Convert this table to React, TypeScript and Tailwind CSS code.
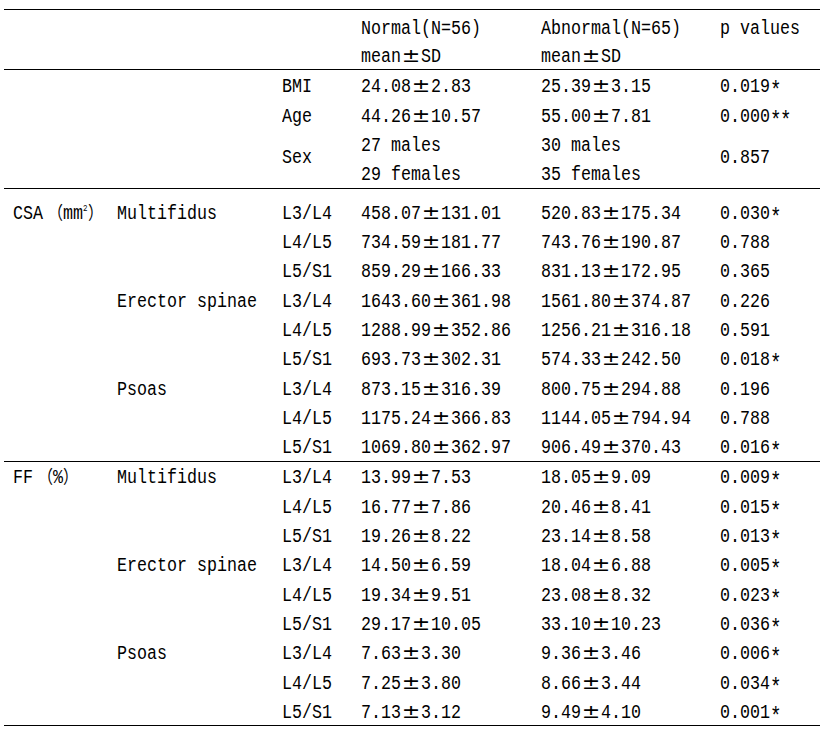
import type { ReactNode } from 'react'

type DataRow = { label?: ReactNode; muscle?: string; level: string; normal: string; abnormal: string; p: string }

const grid = 'grid grid-cols-[104px_165px_79px_180px_179px_1fr] pl-[9px]'

// SimSun-like look: 20px mono glyphs squeezed to 10px cells
function Txt({ children }: { children: ReactNode }) {
  return <span className="inline-block origin-left scale-x-[0.8333] whitespace-nowrap">{children}</span>
}

function Val({ s }: { s: string }) {
  const parts = s.split(/(±|\*)/).filter(Boolean)
  return (
    <Txt>
      {parts.map((p, i) =>
        p === '±' ? (
          <span key={i} className="inline-block w-[24px] text-center font-['DejaVu_Sans',sans-serif] text-[19px] leading-[14px]">
            <span className="inline-block scale-x-[1.4]">±</span>
          </span>
        ) : p === '*' ? (
          <span key={i} className="inline-block w-[12px] text-center text-[23px] leading-[14px] align-[-6px]">*</span>
        ) : (
          <span key={i}>{p}</span>
        ),
      )}
    </Txt>
  )
}

function Cell({ children, className = '' }: { children?: ReactNode; className?: string }) {
  return <div className={`pt-[6.7px] leading-[20px] whitespace-nowrap ${className}`}>{children}</div>
}

const cjk = "font-['Noto_Sans_CJK_SC',sans-serif] text-[18px] leading-[12px]"

const csaLabel = (
  <Txt>
    CSA<span className={`inline-block w-[24px] text-right ${cjk}`}>（</span>mm
    <span className="inline-block w-[6px] text-[9px] leading-[9px] align-[8px]">2</span>
    <span className={`inline-block w-[24px] text-left ${cjk}`}>）</span>
  </Txt>
)

const ffLabel = (
  <Txt>
    FF<span className={`inline-block w-[24px] text-right ${cjk}`}>（</span>%
    <span className={`inline-block w-[24px] text-left ${cjk}`}>）</span>
  </Txt>
)

const csa: DataRow[] = [
  { label: csaLabel, muscle: 'Multifidus', level: 'L3/L4', normal: '458.07±131.01', abnormal: '520.83±175.34', p: '0.030*' },
  { level: 'L4/L5', normal: '734.59±181.77', abnormal: '743.76±190.87', p: '0.788' },
  { level: 'L5/S1', normal: '859.29±166.33', abnormal: '831.13±172.95', p: '0.365' },
  { muscle: 'Erector spinae', level: 'L3/L4', normal: '1643.60±361.98', abnormal: '1561.80±374.87', p: '0.226' },
  { level: 'L4/L5', normal: '1288.99±352.86', abnormal: '1256.21±316.18', p: '0.591' },
  { level: 'L5/S1', normal: '693.73±302.31', abnormal: '574.33±242.50', p: '0.018*' },
  { muscle: 'Psoas', level: 'L3/L4', normal: '873.15±316.39', abnormal: '800.75±294.88', p: '0.196' },
  { level: 'L4/L5', normal: '1175.24±366.83', abnormal: '1144.05±794.94', p: '0.788' },
  { level: 'L5/S1', normal: '1069.80±362.97', abnormal: '906.49±370.43', p: '0.016*' },
]

const ff: DataRow[] = [
  { label: ffLabel, muscle: 'Multifidus', level: 'L3/L4', normal: '13.99±7.53', abnormal: '18.05±9.09', p: '0.009*' },
  { level: 'L4/L5', normal: '16.77±7.86', abnormal: '20.46±8.41', p: '0.015*' },
  { level: 'L5/S1', normal: '19.26±8.22', abnormal: '23.14±8.58', p: '0.013*' },
  { muscle: 'Erector spinae', level: 'L3/L4', normal: '14.50±6.59', abnormal: '18.04±6.88', p: '0.005*' },
  { level: 'L4/L5', normal: '19.34±9.51', abnormal: '23.08±8.32', p: '0.023*' },
  { level: 'L5/S1', normal: '29.17±10.05', abnormal: '33.10±10.23', p: '0.036*' },
  { muscle: 'Psoas', level: 'L3/L4', normal: '7.63±3.30', abnormal: '9.36±3.46', p: '0.006*' },
  { level: 'L4/L5', normal: '7.25±3.80', abnormal: '8.66±3.44', p: '0.034*' },
  { level: 'L5/S1', normal: '7.13±3.12', abnormal: '9.49±4.10', p: '0.001*' },
]

function Rows({ rows }: { rows: DataRow[] }) {
  return (
    <>
      {rows.map((r, i) => (
        <div key={i} className="contents">
          <Cell>{r.label}</Cell>
          <Cell>{r.muscle && <Val s={r.muscle} />}</Cell>
          <Cell><Val s={r.level} /></Cell>
          <Cell><Val s={r.normal} /></Cell>
          <Cell><Val s={r.abnormal} /></Cell>
          <Cell><Val s={r.p} /></Cell>
        </div>
      ))}
    </>
  )
}

export default function App() {
  return (
    <div className="min-h-screen bg-white pl-[4px] pr-[5px] pt-[9px] font-['Liberation_Mono',monospace] text-[20px] text-black">
      {/* header */}
      <div className={`${grid} auto-rows-[28.3px] border-t border-black pt-[2.3px]`}>
        <Cell /><Cell /><Cell />
        <Cell><Val s="Normal(N=56)" /></Cell>
        <Cell><Val s="Abnormal(N=65)" /></Cell>
        <Cell><Val s="p values" /></Cell>
        <Cell /><Cell /><Cell />
        <Cell><Val s="mean±SD" /></Cell>
        <Cell><Val s="mean±SD" /></Cell>
        <Cell />
      </div>

      {/* demographics */}
      <div className={`${grid} auto-rows-[29.3px] border-t border-black pt-[0.7px]`}>
        <Cell /><Cell /><Cell><Val s="BMI" /></Cell>
        <Cell><Val s="24.08±2.83" /></Cell>
        <Cell><Val s="25.39±3.15" /></Cell>
        <Cell><Val s="0.019*" /></Cell>
        <Cell /><Cell /><Cell><Val s="Age" /></Cell>
        <Cell><Val s="44.26±10.57" /></Cell>
        <Cell><Val s="55.00±7.81" /></Cell>
        <Cell><Val s="0.000**" /></Cell>
        <Cell className="row-span-2" /><Cell className="row-span-2" />
        <div className="row-span-2 flex items-center leading-[20px]"><Val s="Sex" /></div>
        <Cell><Val s="27 males" /></Cell>
        <Cell><Val s="30 males" /></Cell>
        <div className="row-span-2 flex items-center leading-[20px]"><Val s="0.857" /></div>
        <Cell><Val s="29 females" /></Cell>
        <Cell><Val s="35 females" /></Cell>
      </div>

      {/* CSA */}
      <div className={`${grid} auto-rows-[29.3px] border-t border-black pt-[8.3px]`}>
        <Rows rows={csa} />
      </div>

      {/* FF */}
      <div className={`${grid} auto-rows-[29.3px] border-y border-black`}>
        <Rows rows={ff} />
      </div>
    </div>
  )
}
